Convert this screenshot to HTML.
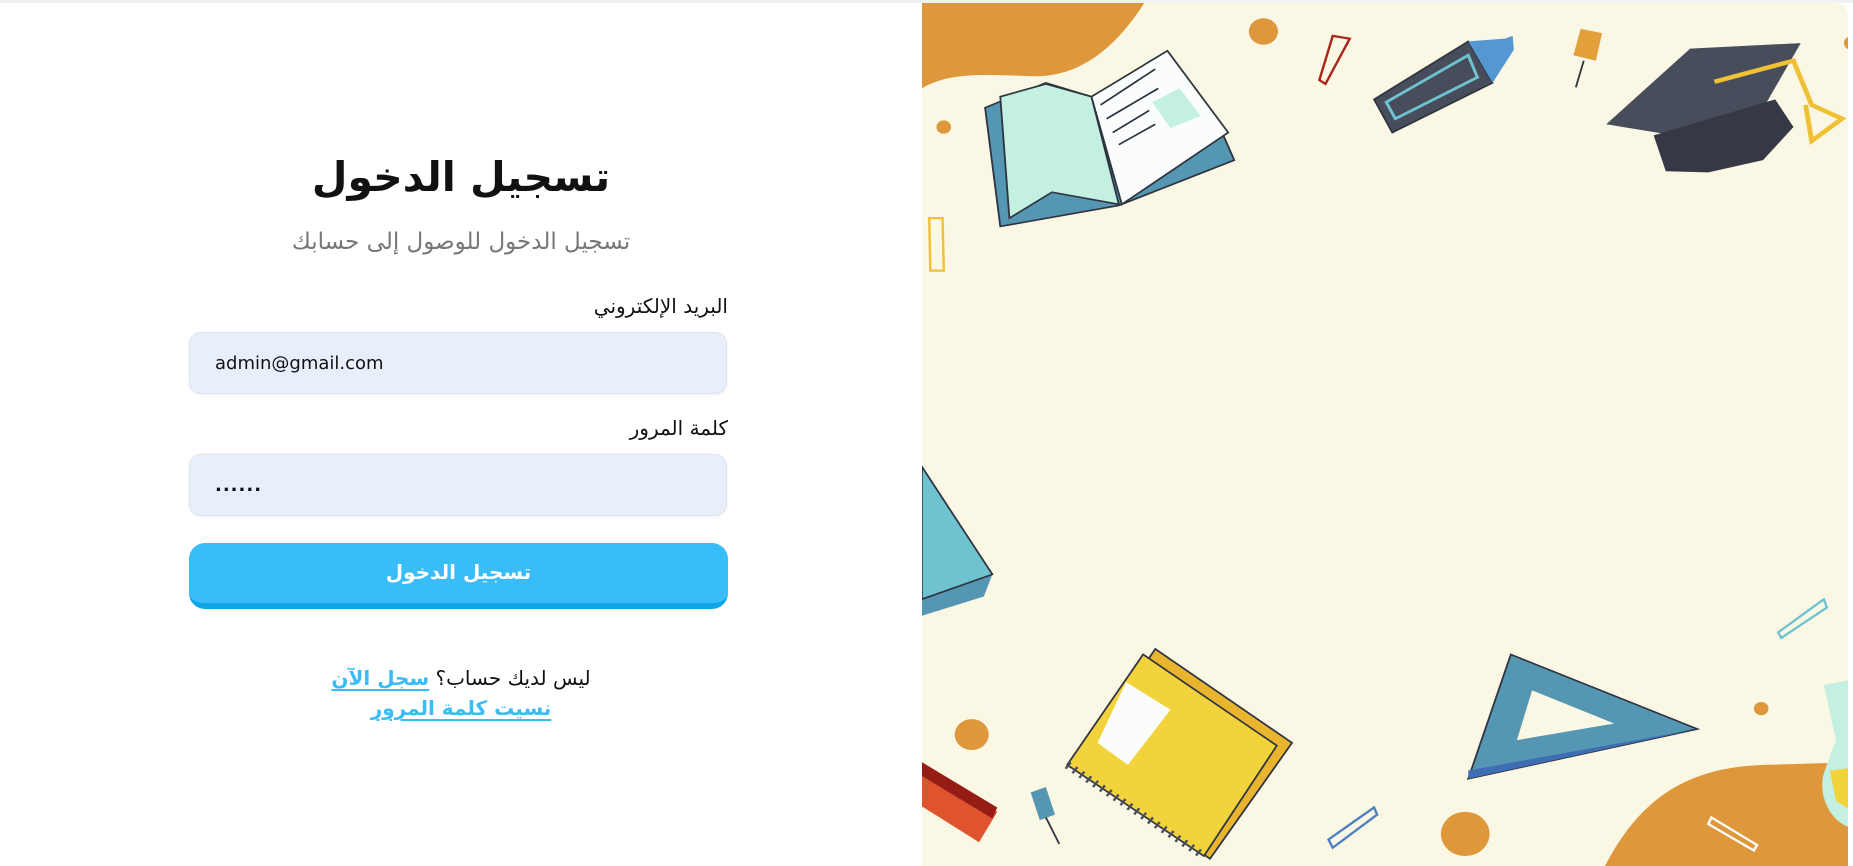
<!DOCTYPE html>
<html><head><meta charset="utf-8"><style>
html,body{margin:0;padding:0;width:1853px;height:866px;overflow:hidden;background:#fff;font-family:"DejaVu Sans","Liberation Sans",sans-serif;}
.top{position:absolute;left:0;top:0;width:1853px;height:3px;background:#f1f1f1;}
.left{position:absolute;left:0;top:3px;width:922px;height:863px;direction:rtl;}
h1{position:absolute;left:0;width:922px;top:150px;margin:0;text-align:center;font-size:41px;font-weight:bold;color:#111;}
.sub{position:absolute;left:0;width:922px;top:226px;text-align:center;font-size:23px;color:#777;}
.lbl{position:absolute;right:194px;font-size:20px;color:#111;}
.inp{position:absolute;left:189px;width:538px;height:62px;background:#e8effb;border:1px solid #dde3ee;border-radius:12px;box-shadow:0 1px 3px rgba(0,0,0,.06);direction:ltr;font-size:18px;color:#111;line-height:62px;padding-left:25px;box-sizing:border-box;}
.btn{position:absolute;left:189px;top:540px;width:539px;height:66px;background:#38bdf8;border-bottom:6px solid #0ea5e9;border-radius:16px;box-sizing:border-box;text-align:center;color:#fff;font-weight:bold;font-size:20px;line-height:58px;}
.links{position:absolute;left:0;width:922px;top:660px;text-align:center;font-size:20px;line-height:30px;color:#111;}
.links a{color:#38bdf8;font-weight:bold;text-decoration:underline;text-underline-offset:4px;}
.right{position:absolute;left:922px;top:3px;width:926px;height:863px;background:#faf7e4;border-top-right-radius:12px;overflow:hidden;}
svg{position:absolute;left:-22px;top:-3px;}
</style></head><body>
<div class="top"></div>
<div class="left">
<h1>تسجيل الدخول</h1>
<div class="sub">تسجيل الدخول للوصول إلى حسابك</div>
<div class="lbl" style="top:291px">البريد الإلكتروني</div>
<div class="inp" style="top:329px">admin@gmail.com</div>
<div class="lbl" style="top:413px">كلمة المرور</div>
<div class="inp" style="top:451px;font-weight:bold;letter-spacing:1px">......</div>
<div class="btn">تسجيل الدخول</div>
<div class="links">ليس لديك حساب؟ <a>سجل الآن</a><br><a>نسيت كلمة المرور</a></div>
</div>
<div class="right">
<svg width="953" height="866" viewBox="0 0 1568 1568" preserveAspectRatio="none">
<path d="M36,0 L405,0 C360,80 300,140 220,138 C140,135 80,130 36,160 Z" fill="#de983b"/>
<circle cx="598" cy="57" r="24" fill="#de983b"/><circle cx="72" cy="230" r="12" fill="#de983b"/>
<circle cx="118" cy="1330" r="28" fill="#de983b"/><circle cx="930" cy="1510" r="40" fill="#de983b"/>
<circle cx="1417" cy="1283" r="12" fill="#de983b"/><circle cx="1565" cy="78" r="12" fill="#de983b"/>
<path d="M1160,1568 C1220,1440 1300,1390 1420,1385 L1568,1380 L1568,1568Z" fill="#de983b"/>
<path d="M140,195 L165,410 L360,372 L550,290 L530,240 L440,95 L315,175 L240,150Z" fill="#5597b3" stroke="#2e3440" stroke-width="3"/>
<path d="M165,175 L240,152 L315,175 L360,370 L250,348 L180,395Z" fill="#c4f0e1" stroke="#2e3440" stroke-width="3"/>
<path d="M315,175 L440,92 L540,240 L365,370Z" fill="#fbfdfc" stroke="#2e3440" stroke-width="3"/>
<path d="M415,185 L460,160 L495,210 L445,232Z" fill="#c4f0e1"/>
<path d="M330,190 L420,125 M340,215 L425,160 M350,240 L410,200 M360,262 L420,225" stroke="#2e3440" stroke-width="3"/>
<path d="M780,180 L935,75 L975,150 L810,240Z" fill="#474d5a" stroke="#2e3440" stroke-width="3"/>
<path d="M800,185 L935,100 L950,140 L815,215Z" fill="none" stroke="#6fc3d0" stroke-width="5"/>
<path d="M935,75 L995,70 L1008,65 L1010,90 L975,150Z" fill="#5597d0"/>
<path d="M712,65 L740,70 L700,152 L690,145Z" fill="none" stroke="#a8271a" stroke-width="4"/>
<path d="M1120,52 L1155,60 L1145,110 L1108,100Z" fill="#e3a03a"/><path d="M1125,110 L1112,158" stroke="#2e3440" stroke-width="3"/>
<path d="M1162,225 L1300,88 L1482,78 L1400,235 L1300,250Z" fill="#474d5a"/>
<path d="M1240,245 L1440,180 L1470,230 L1420,290 L1330,312 L1260,310Z" fill="#363845"/>
<path d="M1340,148 L1470,110 L1500,190 L1550,215 L1500,255 L1490,190" fill="none" stroke="#f0c035" stroke-width="8"/>
<path d="M48,395 L70,395 L72,490 L50,490Z" fill="none" stroke="#f0c035" stroke-width="4"/>
<path d="M36,845 L152,1040 L138,1080 L36,1115Z" fill="#5597b3"/><path d="M36,845 L152,1040 L36,1085Z" fill="#6fc3d0" stroke="#2e3440" stroke-width="3"/>
<path d="M420,1175 L645,1345 L510,1555 L290,1385Z" fill="#e9b52f" stroke="#2e3440" stroke-width="3"/>
<path d="M400,1185 L620,1350 L500,1550 L275,1385Z" fill="#f2d33c" stroke="#2e3440" stroke-width="3"/>
<path d="M372,1235 L445,1285 L375,1385 L325,1345Z" fill="#fbfdfc"/>
<path d="M275,1385 L500,1550" stroke="#474d5a" stroke-width="14" stroke-dasharray="4 10"/>
<path d="M1005,1185 L1312,1320 L935,1410Z" fill="#5597b3" stroke="#2e3440" stroke-width="3"/>
<path d="M935,1395 L1312,1320 L935,1410Z" fill="#3f6db3"/>
<path d="M1040,1250 L1175,1310 L1015,1340Z" fill="#faf7e4"/>
<path d="M36,1380 L160,1470 L130,1525 L36,1460Z" fill="#e0532f"/><path d="M36,1380 L160,1462 L152,1482 L36,1405Z" fill="#951d16"/>
<path d="M215,1435 L240,1425 L255,1475 L230,1485Z" fill="#5597b3"/><path d="M240,1480 L262,1528" stroke="#2e3440" stroke-width="3"/>
<path d="M705,1520 L780,1462 L785,1475 L712,1535Z" fill="none" stroke="#4a7fc4" stroke-width="4"/>
<path d="M1445,1145 L1520,1085 L1525,1100 L1450,1155Z" fill="none" stroke="#6fc3d0" stroke-width="4"/>
<path d="M1335,1480 L1410,1530 L1405,1540 L1330,1492Z" fill="none" stroke="#fff" stroke-width="4"/>
<path d="M1520,1240 L1568,1230 L1568,1500 C1530,1490 1510,1440 1520,1400 L1540,1340Z" fill="#c4f0e1"/>
<path d="M1530,1395 L1568,1390 L1568,1470 L1540,1450Z" fill="#f2d33c"/>
</svg>
</div>
</body></html>
